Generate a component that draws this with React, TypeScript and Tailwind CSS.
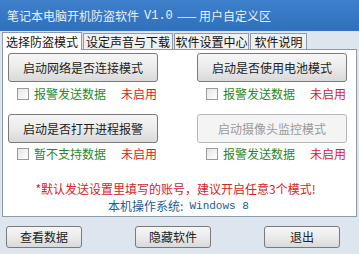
import React from 'react';

const cjk = { fontFamily: '"Noto Sans CJK SC", "Noto Sans", sans-serif' };

const Btn = ({ label, disabled = false, w = 'w-[150px]', h = 'h-[29px]' }: { label: string; disabled?: boolean; w?: string; h?: string }) => (
  <button
    className={`${w} ${h} rounded-[3px] border flex items-center justify-center text-[12px] leading-none ${
      disabled
        ? 'border-[#b8b8b8] bg-[#f4f4f4] text-[#9a9a9a]'
        : 'border-[#7a7a7a] bg-gradient-to-b from-[#f6f6f6] via-[#ebebeb] to-[#d9d9d9] text-[#222]'
    }`}
  >
    {label}
  </button>
);

const CheckRow = ({ label }: { label: string }) => (
  <div className="flex items-center h-[12px] pl-[9px] text-[12px] leading-none">
    <span className="w-[12px] h-[12px] border border-[#9a9a9a] bg-gradient-to-br from-[#e6e6e6] to-white" />
    <span className="ml-[5px] text-[#1f8a1f]">{label}</span>
    <span className="ml-[15px] text-[#d42424]">未启用</span>
  </div>
);

export default function App() {
  return (
    <div className="w-[359px] h-[254px] flex flex-col bg-[#dde5ee] overflow-hidden" style={cjk}>
      {/* title */}
      <div className="h-[31px] flex items-center px-[7px] bg-gradient-to-b from-[#3f80cb] to-[#2f70bd] text-[12px] text-[#e8f0fa]">
        笔记本电脑开机防盗软件 <span className="ml-[5px] font-['Liberation_Mono'] text-[12px]">V1.0</span>
        <span className="ml-[4px] tracking-[2px]">——</span>
        <span>用户自定义区</span>
      </div>

      {/* tabs */}
      <div className="h-[18px] flex items-end pl-[2px] gap-[1px] text-[12px] leading-none text-[#111]">
        <div className="w-[80px] h-[18px] bg-white border border-b-0 border-[#8e9bab] flex items-center justify-center relative top-[1px]">
          选择防盗模式
        </div>
        <div className="w-[90px] h-[16px] bg-[#f0f0f0] border border-b-0 border-[#8e9bab] flex items-center justify-center">
          设定声音与下载
        </div>
        <div className="w-[75px] h-[16px] bg-[#f0f0f0] border border-b-0 border-[#8e9bab] flex items-center justify-center">
          软件设置中心
        </div>
        <div className="w-[57px] h-[16px] bg-[#f0f0f0] border border-b-0 border-[#8e9bab] flex items-center justify-center">
          软件说明
        </div>
      </div>

      {/* panel */}
      <div className="mx-[2px] h-[168px] bg-white border border-[#8e9bab] pt-[3px] flex flex-col">
        <div className="grid grid-cols-[189px_150px] pl-[5px]">
          <div className="flex flex-col">
            <Btn label="启动网络是否连接模式" />
            <div className="mt-[6px]"><CheckRow label="报警发送数据" /></div>
            <div className="mt-[14px]"><Btn label="启动是否打开进程报警" /></div>
            <div className="mt-[5px]"><CheckRow label="暂不支持数据" /></div>
          </div>
          <div className="flex flex-col">
            <Btn label="启动是否使用电池模式" />
            <div className="mt-[6px]"><CheckRow label="报警发送数据" /></div>
            <div className="mt-[14px]"><Btn label="启动摄像头监控模式" disabled /></div>
            <div className="mt-[5px]"><CheckRow label="报警发送数据" /></div>
          </div>
        </div>
        <div className="mt-[23px] text-center text-[12px] leading-none text-[#d42424] pr-[8px]">
          *默认发送设置里填写的账号，建议开启任意3个模式!
        </div>
        <div className="mt-[5px] flex justify-center items-center text-[12px] leading-none text-[#1b5d96] pr-[2px]">
          本机操作系统:
          <span className="ml-[6px] font-['Liberation_Mono'] text-[11px]">Windows 8</span>
        </div>
      </div>

      {/* bottom buttons */}
      <div className="flex items-center pl-[6px] pt-[9px]">
        <Btn label="查看数据" w="w-[76px]" h="h-[22px]" />
        <div className="ml-[53px]"><Btn label="隐藏软件" w="w-[76px]" h="h-[22px]" /></div>
        <div className="ml-[53px]"><Btn label="退出" w="w-[76px]" h="h-[22px]" /></div>
      </div>
    </div>
  );
}
